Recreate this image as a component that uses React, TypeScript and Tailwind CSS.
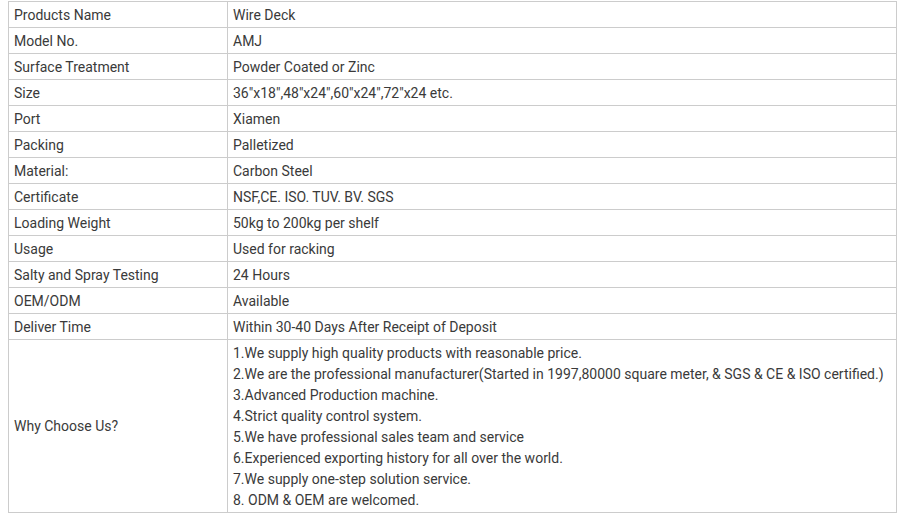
const rows: [string, string][] = [
  ['Products Name', 'Wire Deck'],
  ['Model No.', 'AMJ'],
  ['Surface Treatment', 'Powder Coated or Zinc'],
  ['Size', '36"x18",48"x24",60"x24",72"x24 etc.'],
  ['Port', 'Xiamen'],
  ['Packing', 'Palletized'],
  ['Material:', 'Carbon Steel'],
  ['Certificate', 'NSF,CE. ISO. TUV. BV. SGS'],
  ['Loading Weight', '50kg to 200kg per shelf'],
  ['Usage', 'Used for racking'],
  ['Salty and Spray Testing', '24 Hours'],
  ['OEM/ODM', 'Available'],
  ['Deliver Time', 'Within 30-40 Days After Receipt of Deposit'],
];

const reasons = [
  '1.We supply high quality products with reasonable price.',
  '2.We are the professional manufacturer(Started in 1997,80000 square meter, & SGS & CE & ISO certified.)',
  '3.Advanced Production machine.',
  '4.Strict quality control system.',
  '5.We have professional sales team and service',
  '6.Experienced exporting history for all over the world.',
  '7.We supply one-step solution service.',
  '8. ODM & OEM are welcomed.',
];

export default function App() {
  return (
    <div className="bg-white pl-2 pt-px font-['Roboto',sans-serif] text-[14px] text-[#3a3a3a]">
      <table className="w-[889px] border-collapse">
        <tbody>
          {rows.map(([label, value]) => (
            <tr key={label} className="h-[26px]">
              <td className="w-[219px] border border-[#ccc] px-[5px] pt-[2px] pb-0 leading-[23px]">{label}</td>
              <td className="border border-[#ccc] px-[5px] pt-[2px] pb-0 leading-[23px]">{value}</td>
            </tr>
          ))}
          <tr className="h-[173px]">
            <td className="border border-[#ccc] px-[5px] align-middle">Why Choose Us?</td>
            <td className="border border-[#ccc] px-[5px] pt-[3px] pb-[1px] leading-[21px]">
              {reasons.map((r) => (
                <div key={r}>{r}</div>
              ))}
            </td>
          </tr>
        </tbody>
      </table>
    </div>
  );
}
